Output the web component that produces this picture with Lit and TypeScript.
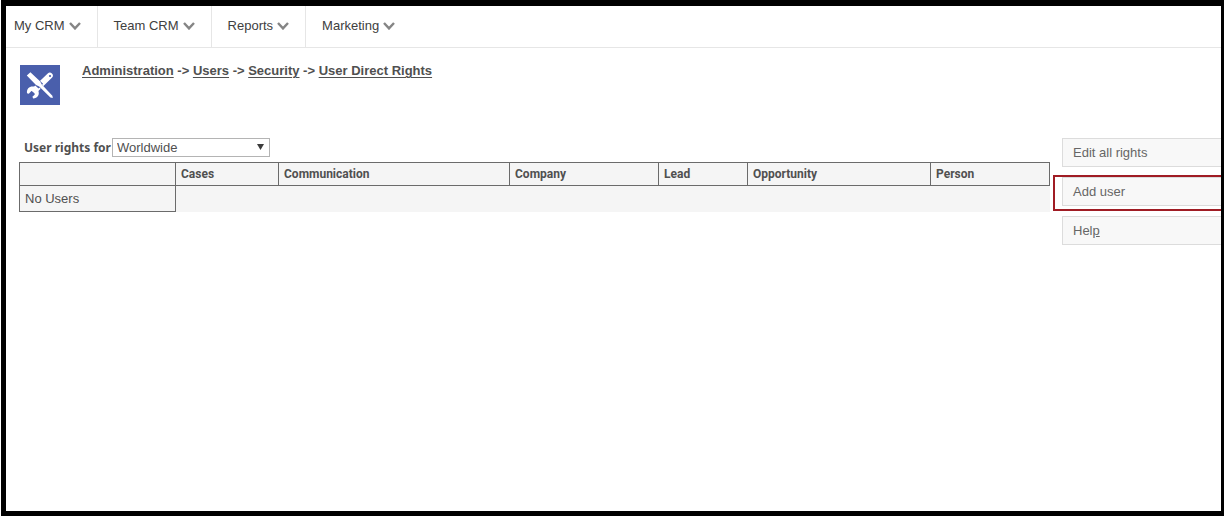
import { LitElement, html, css } from "lit";
import { customElement } from "lit/decorators.js";

const MENUS = ["My CRM", "Team CRM", "Reports", "Marketing"];
const TRAIL = ["Administration", "Users", "Security", "User Direct Rights"];
const COLUMNS = [
  { label: "", share: 156 },
  { label: "Cases", share: 103 },
  { label: "Communication", share: 231 },
  { label: "Company", share: 149 },
  { label: "Lead", share: 89 },
  { label: "Opportunity", share: 183 },
  { label: "Person", share: 119 },
];
const TOTAL = COLUMNS.reduce((sum, c) => sum + c.share, 0);

@customElement("app-root")
export class AppRoot extends LitElement {
  static styles = css`
    :host {
      display: block;
      box-sizing: border-box;
      min-height: 100vh;
      margin-left: 1px;
      border: solid #000;
      border-width: 6px 3px 5px 5px;
      background: #fff;
      color: #505050;
      font: 13px/16px "Liberation Sans", Arial, sans-serif;
    }
    * { box-sizing: border-box; }
    .menu {
      display: flex;
      height: 42px;
      border-bottom: 1px solid #e6e6e6;
    }
    .menu-item {
      display: flex;
      align-items: center;
      gap: 4px;
      padding: 0 16px 2px;
      border: 0;
      border-right: 1px solid #e6e6e6;
      background: none;
      color: #404040;
      font: inherit;
    }
    .menu-item:first-child { padding-left: 8px; }
    .menu-item:last-child { border-right: 0; }
    .chevron { width: 12px; height: 8px; }
    .heading {
      display: flex;
      gap: 22px;
      padding: 17px 14px 0;
    }
    .tools { width: 40px; height: 40px; flex: none; }
    .crumbs { font-weight: bold; line-height: 12px; }
    .crumbs a { color: inherit; text-underline-offset: 2px; }
    .body {
      display: flex;
      align-items: flex-start;
      gap: 12px;
      padding: 33px 0 0 13px;
    }
    .main { flex: 1; min-width: 0; }
    .filter {
      display: flex;
      align-items: center;
      padding-left: 5px;
      margin-bottom: 5px;
    }
    .filter label {
      min-width: 88px;
      font: bold 12px/16px "Noto Sans", "Open Sans", sans-serif;
    }
    .picker { position: relative; width: 158px; height: 19px; }
    .picker select {
      display: block;
      width: 100%;
      height: 100%;
      padding: 0 20px 0 4px;
      border: 1px solid #b4b4b4;
      border-radius: 0;
      background: #fff;
      color: inherit;
      font: inherit;
      appearance: none;
    }
    .arrow {
      position: absolute;
      right: 6px;
      top: 6px;
      width: 7px;
      height: 6px;
      pointer-events: none;
    }
    .rights {
      width: 100%;
      border-collapse: collapse;
      table-layout: fixed;
      background: #f5f5f5;
    }
    .rights th {
      height: 23px;
      padding: 0 5px;
      border: 1px solid #6b6b6b;
      text-align: left;
      font: bold 12px/16px Roboto, "Liberation Sans", sans-serif;
    }
    .rights td { height: 26px; padding: 0 5px; }
    .rights .name { border: 1px solid #6b6b6b; }
    .actions {
      display: flex;
      flex-direction: column;
      gap: 10px;
      width: 159px;
      flex: none;
    }
    .slot { position: relative; }
    .action {
      display: block;
      width: 100%;
      height: 29px;
      padding: 0 10px;
      border: 1px solid #dcdcdc;
      border-right: 0;
      background: #f8f8f8;
      color: #666;
      font: inherit;
      text-align: left;
    }
    .marked::after {
      content: "";
      position: absolute;
      inset: -2px 0 -5px -9px;
      border: 2px solid #a01c24;
      border-right: 0;
      pointer-events: none;
    }
  `;

  render() {
    return html`
      <nav class="menu">
        ${MENUS.map(
          (m) => html`<button class="menu-item" type="button">
            ${m}
            <svg class="chevron" viewBox="0 0 12 8" aria-hidden="true">
              <path d="M1 1 L6 6.4 L11 1" fill="none" stroke="#858585" stroke-width="2.4" />
            </svg>
          </button>`
        )}
      </nav>
      <header class="heading">
        <svg class="tools" viewBox="0 0 40 40" aria-hidden="true">
          <rect width="40" height="40" fill="#4a5fac" />
          <path d="M15 25 L29.8 10.6" stroke="#fff" stroke-width="6" stroke-linecap="round" />
          <path d="M7 28.2 C6.4 23.6 9.8 20.8 14 21.6 L18.4 26 C19.8 30 17.6 33.2 13.2 33.4 L12.4 31.8 L14.8 29.4 L14 26.6 L11.4 26 L8.8 28.8 Z" fill="#fff" />
          <circle cx="30" cy="11" r="1.1" fill="#4a5fac" />
          <path d="M11 12 L20.8 21.2" stroke="#4a5fac" stroke-width="6.6" />
          <path d="M20 20.4 L29 29.4" stroke="#4a5fac" stroke-width="3.8" />
          <path d="M6.8 10.6 L10.4 7.2 L20 16.2 L21.8 19.4 L32.4 30.8 L32.8 33 L30.4 32.4 L19.2 21.6 L16 20 Z" fill="#fff" />
        </svg>
        <nav class="crumbs">
          ${TRAIL.map((t, i) => html`${i ? " -> " : ""}<a href="#">${t}</a>`)}
        </nav>
      </header>
      <div class="body">
        <main class="main">
          <div class="filter">
            <label for="territory">User rights for</label>
            <span class="picker">
              <select id="territory"><option>Worldwide</option></select>
              <svg class="arrow" viewBox="0 0 7 6" aria-hidden="true">
                <path d="M0 0 H7 L3.5 6 Z" fill="#3c3c3c" />
              </svg>
            </span>
          </div>
          <table class="rights">
            <colgroup>
              ${COLUMNS.map((c) => html`<col style="width:${(c.share / TOTAL) * 100}%" />`)}
            </colgroup>
            <thead>
              <tr>${COLUMNS.map((c) => html`<th scope="col">${c.label}</th>`)}</tr>
            </thead>
            <tbody>
              <tr>
                <td class="name">No Users</td>
                <td colspan="6"></td>
              </tr>
            </tbody>
          </table>
        </main>
        <aside class="actions">
          <div class="slot"><button class="action" type="button">Edit all rights</button></div>
          <div class="slot marked"><button class="action" type="button">Add user</button></div>
          <div class="slot"><button class="action" type="button">Hel<u>p</u></button></div>
        </aside>
      </div>
    `;
  }
}
